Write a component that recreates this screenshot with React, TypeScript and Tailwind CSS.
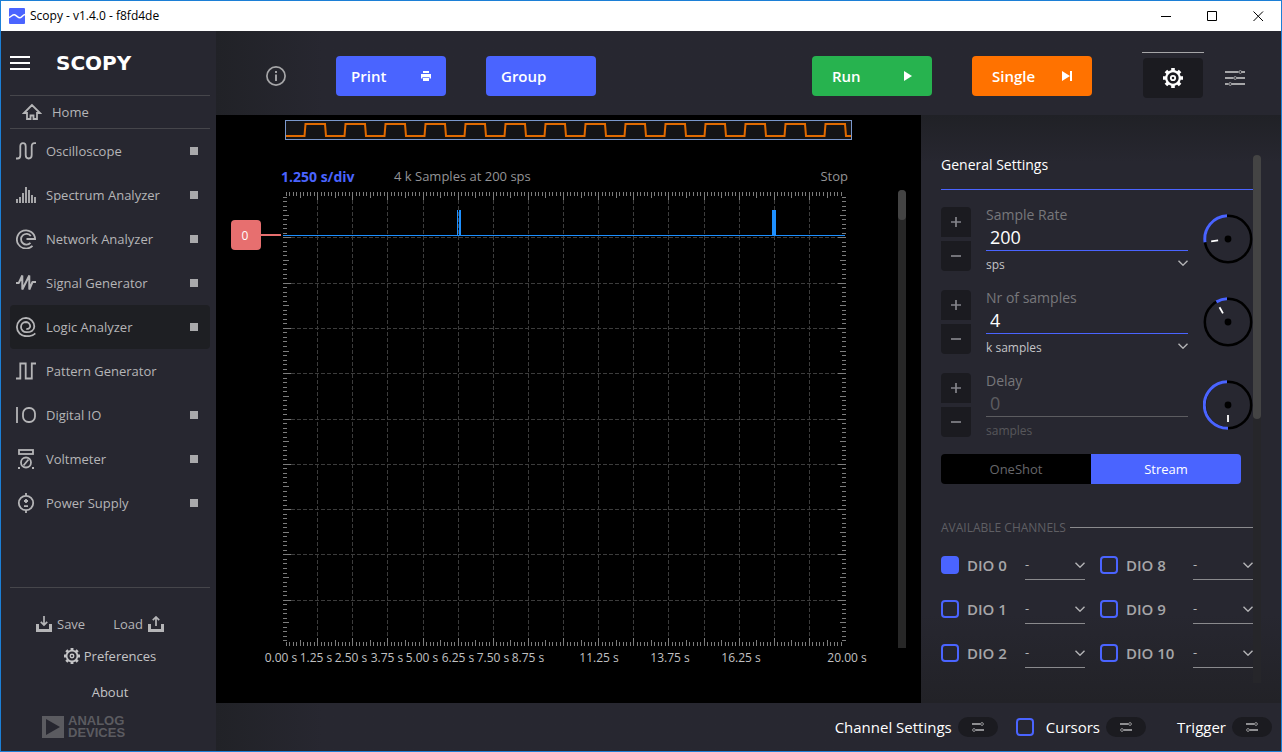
import { useState, type ReactNode } from "react";

/* ---------- icons ---------- */

function Glyph({ children, className = "size-5" }: { children: ReactNode; className?: string }) {
  return (
    <svg viewBox="0 0 20 20" className={className} fill="none" stroke="currentColor" strokeWidth="1.8" aria-hidden="true">
      {children}
    </svg>
  );
}

const toolIcons: Record<string, ReactNode> = {
  Oscilloscope: (
    <path d="M0 17.5h1.500c2 0 2.800-1 2.800-3V5.500c0-2.300.8-3.300 2.700-3.300s2.700 1 2.700 3.300v8.500c0 2.300 1 3.500 3 3.500s3-1.200 3-3.500V5.500c0-2.300.8-3.300 2.800-3.300H20" />
  ),
  "Spectrum Analyzer": <path d="M1 18v-4M4 18v-6M7 18V8M10 18V2M13 18V5M16 18v-8M19 18v-6" />,
  "Network Analyzer": (
    <path d="M16.500 16.800A9.100 9.100 0 1 1 19.100 10H10.500M14.500 13.800A5.400 5.400 0 1 1 14.800 7" />
  ),
  "Signal Generator": <path d="M0 10h2.800L6.300 2.500v14L13.300 2.500v14L16.500 9H20" strokeWidth="2" strokeLinejoin="bevel" />,
  "Logic Analyzer": (
    <path d="M19.300 16.300C17 18.600 13.500 19.300 10.500 19.200A9.400 9.200 0 0 1 .9 10 9.100 9.100 0 0 1 10 .9 8.600 8.600 0 0 1 18.300 9.500C18.300 13.500 14.500 15.300 10.500 15.200A5.300 5.200 0 0 1 5 10 5 5 0 0 1 10 5 4.400 4.400 0 0 1 14.200 9.300 3 3 0 0 1 10.300 11.800" />
  ),
  "Pattern Generator": <path d="M0 17.500h4.300v-15h5.400v15h6.100v-15H20" />,
  "Digital IO": (
    <>
      <path d="M1 2v16" />
      <rect x="7" y="3" width="12" height="14" rx="5.500" />
    </>
  ),
  Voltmeter: (
    <>
      <rect x="3" y="1" width="14" height="4" />
      <circle cx="10" cy="13.500" r="5" />
      <path d="M7.500 16.500l5-6M2 19h2M16 19h2" />
    </>
  ),
  "Power Supply": (
    <>
      <circle cx="10" cy="10" r="7.200" />
      <path d="M10 0v3M10 17v3M8 8h4M10 6v4M8 13.200h4" />
    </>
  ),
};

function Gear({ className }: { className: string }) {
  return (
    <svg viewBox="0 0 20 20" className={className} fill="none" stroke="currentColor" aria-hidden="true">
      <circle cx="10" cy="10" r="6.800" strokeWidth="2.200" />
      <circle cx="10" cy="10" r="2.200" strokeWidth="1.800" />
      <path
        d="M10 0v3M10 17v3M0 10h3M17 10h3M2.900 2.900L5 5M15 15l2.100 2.100M2.900 17.100L5 15M15 5l2.100-2.100"
        strokeWidth="3.600"
      />
    </svg>
  );
}

function Tray({ up }: { up?: boolean }) {
  return (
    <svg viewBox="0 0 16 16" className="size-4" fill="none" stroke="currentColor" aria-hidden="true">
      <path d="M0 8h3v5h10V8h3v8H0z" fill="currentColor" stroke="none" />
      <path d={up ? "M8 10V1M4.800 4.200L8 1l3.200 3.200" : "M8 0v9M4.800 5.800L8 9l3.200-3.200"} strokeWidth="1.700" />
    </svg>
  );
}

function Chevron() {
  return (
    <svg viewBox="0 0 10 6" className="h-[6px] w-[10px]" fill="none" stroke="#b4b4b6" strokeWidth="1.400" aria-hidden="true">
      <path d="M.5.7L5 5.200 9.500.7" />
    </svg>
  );
}

function Sliders() {
  return (
    <svg viewBox="0 0 20 16" className="h-4 w-5" fill="none" stroke="#a6a6a8" aria-hidden="true">
      <path d="M0 2h13.500M17 2h3M0 8h8.500M12 8h8M0 14h3.500M7 14h13" strokeWidth="1.800" />
      <circle cx="15.300" cy="2" r="1.400" />
      <circle cx="10.200" cy="8" r="1.400" />
      <circle cx="5.200" cy="14" r="1.400" />
    </svg>
  );
}

function PillButton({ label }: { label: string }) {
  return (
    <button type="button" aria-label={label} className="flex h-5 w-10 shrink-0 items-center justify-center rounded-full bg-[#1b1b20]">
      <svg viewBox="0 0 12 10" className="h-[10px] w-3" fill="none" stroke="#8f8f92" aria-hidden="true">
        <path d="M0 2h8.500M3.500 8H12" strokeWidth="1.800" />
        <circle cx="10" cy="2" r="1.400" />
        <circle cx="2" cy="8" r="1.400" />
      </svg>
    </button>
  );
}

/* ---------- title bar ---------- */

function TitleBar() {
  return (
    <header className="flex h-[30px] shrink-0 items-center bg-white pl-2 text-xs text-black">
      <svg viewBox="0 0 16 16" className="mr-[5px] size-4" aria-hidden="true">
        <rect width="16" height="16" rx="1" fill="#4a64ff" />
        <path d="M0 9.500C2.500 8.500 3.500 6.500 5.500 6.800S9 10 11 9.800 13.500 7 16 6.500" stroke="#fff" strokeWidth="1.500" fill="none" />
      </svg>
      <h1>Scopy - v1.4.0 - f8fd4de</h1>
      <div className="ml-auto flex h-full">
        {[
          ["Minimize", "M0 5.500h10"],
          ["Maximize", "M.5.5h9v9h-9z"],
          ["Close", "M.5.5l9.500 9.500M10 .5L.5 10"],
        ].map(([name, d]) => (
          <button key={name} type="button" aria-label={name} className="flex w-[46px] items-center justify-center">
            <svg viewBox="0 0 10 10" className="size-[10px] overflow-visible" fill="none" stroke="#000" aria-hidden="true">
              <path d={d} />
            </svg>
          </button>
        ))}
      </div>
    </header>
  );
}

/* ---------- sidebar ---------- */

function Sidebar() {
  return (
    <aside className="flex w-[215px] shrink-0 flex-col bg-[#272730] pr-[6px] pl-[9px] text-[13px] text-[#b5b5b7]">
      <div className="box-content flex h-16 items-center border-b border-[#46464b]">
        <button type="button" aria-label="Menu" className="flex w-5 flex-col gap-1">
          <span className="h-[2px] bg-white" />
          <span className="h-[2px] bg-white" />
          <span className="h-[2px] bg-white" />
        </button>
        <span className="ml-[26px] font-['DejaVu_Sans',sans-serif] text-xl leading-5 font-bold text-white">SCOPY</span>
      </div>
      <a href="#home" className="box-content flex h-8 items-center gap-[10px] border-b border-[#46464b] pl-3">
        <Glyph>
          <path d="M10 3L2 11h3v6h3.500v-3.500h3V17H15v-6h3z" strokeWidth="1.800" />
        </Glyph>
        <span className="pt-[2px]">Home</span>
      </a>
      <nav className="flex flex-col">
        {Object.keys(toolIcons).map((name) => (
          <a
            key={name}
            href={"#" + name.toLowerCase().replace(" ", "-")}
            className={`flex h-11 items-center gap-[10px] rounded pr-3 pl-[6px] ${name === "Logic Analyzer" ? "bg-[#1e1f23]" : ""}`}
          >
            <Glyph>{toolIcons[name]}</Glyph>
            <span className="pt-[2px]">{name}</span>
            {name !== "Pattern Generator" && <span className="ml-auto size-2 bg-[#a9a9ab]" />}
          </a>
        ))}
      </nav>
      <div className="mt-auto flex flex-col items-center border-t border-[#46464b] pt-6 pb-3">
        <div className="flex h-6 gap-7 pr-5">
          <button type="button" className="flex items-center gap-[5px]">
            <Tray />
            <span className="pt-[2px]">Save</span>
          </button>
          <button type="button" className="flex items-center gap-[5px]">
            <span className="pt-[2px]">Load</span>
            <Tray up />
          </button>
        </div>
        <button type="button" className="mt-2 flex h-6 items-center gap-1 text-[#c4c4c6]">
          <Gear className="size-4" />
          <span className="pt-[2px]">Preferences</span>
        </button>
        <button type="button" className="mt-3 h-6 pt-[2px] text-[#c4c4c6]">
          About
        </button>
        <div className="mt-[11px] flex h-6 items-center gap-1 self-start pl-8 text-[#5b5b60]">
          <svg viewBox="0 0 22 22" className="size-[22px]" aria-hidden="true">
            <path d="M0 0h22v22H0zM4 3v16l14-8z" fill="currentColor" fillRule="evenodd" />
          </svg>
          <span className="flex flex-col font-['Liberation_Sans',sans-serif] text-[13px] leading-3 font-bold">
            <span>ANALOG</span>
            <span>DEVICES</span>
          </span>
        </div>
      </div>
    </aside>
  );
}

/* ---------- toolbar ---------- */

function Toolbar() {
  const action = "flex h-10 items-center justify-between rounded font-semibold text-white text-[15px]";
  return (
    <div className="flex h-[84px] shrink-0 items-center bg-linear-to-r from-[#212227] to-[#272730] to-10% pt-[6px] pr-[15px] pl-[50px]">
      <button type="button" aria-label="Information" className="mr-[50px] text-[#a6a6a8]">
        <Glyph>
          <circle cx="10" cy="10" r="9.100" strokeWidth="1.700" />
          <path d="M10 5v2M10 8.500V15" strokeWidth="1.900" />
        </Glyph>
      </button>
      <div className="flex gap-10">
        <button type="button" className={action + " w-[110px] bg-[#4a64ff] px-[15px]"}>
          Print
          <svg viewBox="0 0 10 10" className="size-[10px]" aria-hidden="true">
            <path d="M2 0h6v2H2zM0 3h10v4.500H8.500V6h-7v1.500H0zM2 6.800h6V10H2z" fill="#fff" />
          </svg>
        </button>
        <button type="button" className={action + " w-[110px] bg-[#4a64ff] px-[15px]"}>
          Group
        </button>
      </div>
      <div className="ml-auto flex gap-10">
        <button type="button" className={action + " w-[120px] bg-[#27b34f] px-5"}>
          Run
          <svg viewBox="0 0 8 10" className="h-[10px] w-2" aria-hidden="true">
            <path d="M0 0l8 5-8 5z" fill="#fff" />
          </svg>
        </button>
        <button type="button" className={action + " w-[120px] bg-[#ff7200] px-5"}>
          Single
          <svg viewBox="0 0 10 10" className="size-[10px]" aria-hidden="true">
            <path d="M0 0l8 5-8 5zM8 0h2v10H8z" fill="#fff" />
          </svg>
        </button>
      </div>
      <div className="ml-[50px] flex">
        <div className="flex w-[62px] justify-center border-t border-[#a6a6a8] pt-[5px] pb-[2px]">
          <button type="button" aria-label="General settings" className="flex h-10 w-[60px] items-center justify-center rounded bg-[#1b1b20] text-white">
            <Gear className="size-5" />
          </button>
        </div>
        <div className="flex w-[62px] justify-center border-t border-transparent pt-[5px] pb-[2px]">
          <button type="button" aria-label="Channel options" className="flex h-10 w-[60px] items-center justify-center rounded">
            <Sliders />
          </button>
        </div>
      </div>
    </div>
  );
}

/* ---------- plot ---------- */

const columns = Array.from({ length: 15 }, (_, i) => Math.floor(66.49 + 35.13 * (i + 1)) + 0.5);
const rows = Array.from({ length: 9 }, (_, i) => Math.round(6 + 45.3 * (i + 1)) + 0.5);
const tickLength = (i: number) => (i % 10 === 0 ? 8 : i % 5 === 0 ? 6 : 4);

const xTicks = Array.from({ length: 159 }, (_, k) => {
  const i = k + 1;
  const x = Math.floor(66.49 + 3.513 * i) + 0.5;
  return `M${x} 6v${tickLength(i)}M${x} 460v-${tickLength(i)}`;
}).join("");
const yTicks = Array.from({ length: 99 }, (_, k) => {
  const i = k + 1;
  const y = Math.round(6 + 4.53 * i) + 0.5;
  return `M67 ${y}h${tickLength(i)}M630 ${y}h-${tickLength(i)}`;
}).join("");
const timeLabels: [number, string][] = [
  [0, "0.00 s"],
  [1, "1.25 s"],
  [2, "2.50 s"],
  [3, "3.75 s"],
  [4, "5.00 s"],
  [5, "6.25 s"],
  [6, "7.50 s"],
  [7, "8.75 s"],
  [9, "11.25 s"],
  [11, "13.75 s"],
  [13, "16.25 s"],
  [16, "20.00 s"],
];
const overviewWave =
  "M1 16" + Array.from({ length: 14 }, (_, i) => `H${19.5 + 40 * i}L${20.5 + 40 * i} 4H${40 + 40 * i}L${41 + 40 * i} 16`).join("") + "H566";

function Plot() {
  return (
    <section aria-label="Logic plot" className="flex min-w-0 flex-1 flex-col bg-black">
      <svg viewBox="0 0 567 20" className="mt-[5px] mr-[69px] ml-[69px] block" aria-hidden="true">
        <rect x=".5" y=".5" width="566" height="19" fill="#141416" stroke="#7b98cc" />
        <path d={overviewWave} fill="none" stroke="#e06a00" strokeWidth="2" />
      </svg>
      <div className="mt-[26px] mr-[73px] ml-[65px] flex h-[20px] items-center pt-[2px] text-[13px] text-[#949496]">
        <span className="w-[113px] text-sm font-bold text-[#4a64ff]">1.250 s/div</span>
        <span>4 k Samples at 200 sps</span>
        <span className="ml-auto">Stop</span>
      </div>
      <div className="flex pr-[15px]">
        <svg viewBox="0 0 682 488" className="block min-w-0 flex-1 font-['Open_Sans',sans-serif]" aria-label="Waveform over time">
          <g stroke="#3c3c3c" strokeDasharray="4 2" fill="none">
            {columns.map((x) => (
              <path key={x} d={`M${x} 14V452`} />
            ))}
            {rows.map((y) => (
              <path key={y} d={`M75 ${y}H622`} />
            ))}
          </g>
          <path d={xTicks + yTicks} stroke="#7c7c7c" />
          <path d="M67 49.500H629" stroke="#1e90ff" />
          <path d="M241 24h1v25h-1zM243 24h2v25h-2zM556 24h4v25h-4z" fill="#1e90ff" />
          <rect x="15" y="34" width="30" height="30" rx="4" fill="#e76f6f" />
          <path d="M44 49H65" stroke="#e76f6f" strokeWidth="2" />
          <text x="29" y="54" textAnchor="middle" fontSize="12" fill="#fff">
            0
          </text>
          <g fill="#c0c0c2" fontSize="12" textAnchor="middle">
            {timeLabels.map(([i, label]) => (
              <text key={label} x={Math.round(64.5 + 35.4 * i)} y="476">
                {label}
              </text>
            ))}
          </g>
        </svg>
        <div className="mt-1 mb-[26px] w-2 shrink-0 rounded-t bg-[#272727]">
          <div className="h-[30px] rounded bg-[#444444]" />
        </div>
      </div>
    </section>
  );
}

/* ---------- settings ---------- */

function Dial({ angle }: { angle: number }) {
  const rad = (angle * Math.PI) / 180;
  const px = (r: number) => 25 - r * Math.sin(rad);
  const py = (r: number) => 25 - r * Math.cos(rad);
  return (
    <svg viewBox="0 0 50 50" className="mt-[7px] size-[50px] shrink-0" fill="none" aria-hidden="true">
      <circle cx="25" cy="25" r="23.200" stroke="#000" strokeWidth="2.500" />
      <path d={`M24 1.800A23.200 23.200 0 0 0 ${px(23.2)} ${py(23.2)}`} stroke="#4a64ff" strokeWidth="3" />
      <circle cx="25" cy="25" r="3.400" fill="#000" />
      <path d={`M${px(10)} ${py(10)}L${px(17)} ${py(17)}`} stroke="#fff" strokeWidth="1.800" />
    </svg>
  );
}

type FieldProps = { id: string; label: string; value: string; unit: string; angle: number; disabled?: boolean };

function SpinField({ id, label, value, unit, angle, disabled }: FieldProps) {
  const [text, setText] = useState(value);
  return (
    <div className="flex items-start">
      <div className="flex w-[30px] flex-col gap-1">
        <button type="button" aria-label={`Increase ${label}`} className="flex h-[30px] items-center justify-center rounded-t bg-[#1b1b20]">
          <svg viewBox="0 0 10 10" className="size-[10px]" stroke="#84848a" strokeWidth="1.700" aria-hidden="true">
            <path d="M0 5h10M5 0v10" />
          </svg>
        </button>
        <button type="button" aria-label={`Decrease ${label}`} className="flex h-[30px] items-center justify-center rounded-b bg-[#1b1b20]">
          <svg viewBox="0 0 10 10" className="size-[10px]" stroke="#84848a" strokeWidth="1.700" aria-hidden="true">
            <path d="M0 5h10" />
          </svg>
        </button>
      </div>
      <div className="mr-[15px] ml-[15px] flex min-w-0 flex-1 flex-col">
        <label htmlFor={id} className="h-4 text-sm leading-4 text-[#77777b]">
          {label}
        </label>
        <input
          id={id}
          value={text}
          disabled={disabled}
          onChange={(e) => setText(e.target.value)}
          className={`h-7 w-full border-b bg-transparent px-1 pt-px text-lg leading-6 outline-none ${disabled ? "border-[#5c5c60] text-[#5c5c60]" : "border-[#4a64ff] text-white"}`}
        />
        <div className="relative flex h-6 items-center">
          <select
            aria-label={`${label} unit`}
            disabled={disabled}
            className={`h-6 w-full appearance-none bg-transparent pt-1 text-xs opacity-100 outline-none ${disabled ? "text-[#57575b]" : "text-[#c4c4c6]"}`}
          >
            <option>{unit}</option>
          </select>
          {!disabled && (
            <span className="pointer-events-none absolute right-0">
              <Chevron />
            </span>
          )}
        </div>
      </div>
      <Dial angle={angle} />
    </div>
  );
}

function Check({ id, checked }: { id: string; checked?: boolean }) {
  return (
    <input
      id={id}
      type="checkbox"
      defaultChecked={checked}
      className="size-[18px] shrink-0 appearance-none rounded border-2 border-[#4a64ff] checked:bg-[#4a64ff]"
    />
  );
}

function Channel({ n }: { n: number }) {
  const id = `dio-${n}`;
  return (
    <div className="flex h-[30px] items-center">
      <Check id={id} checked={n === 0} />
      <label htmlFor={id} className="ml-2 text-[15px] font-semibold whitespace-nowrap text-[#a6a6a8]">
        DIO {n}
      </label>
      <div className="relative ml-auto flex w-[60px] items-center">
        <select
          aria-label={`DIO ${n} decoder`}
          className="h-[30px] w-full appearance-none border-b border-[#8a8a8d] bg-transparent text-[13px] text-[#b5b5b7] outline-none"
        >
          <option>-</option>
        </select>
        <span className="pointer-events-none absolute right-0">
          <Chevron />
        </span>
      </div>
    </div>
  );
}

function SettingsPanel() {
  return (
    <section
      aria-label="General Settings"
      className="flex w-[360px] shrink-0 bg-[linear-gradient(#202126,#272730_8%,#272730_85%,#222227)] pt-10 pr-5 pb-5 pl-5"
    >
      <div className="flex min-w-0 flex-1 flex-col">
        <h2 className="h-[35px] border-b border-[#4a64ff] text-sm leading-5 text-white">General Settings</h2>
        <div className="mt-[17px] flex flex-col gap-[15px]">
          <SpinField id="rate" label="Sample Rate" value="200" unit="sps" angle={98} />
          <SpinField id="count" label="Nr of samples" value="4" unit="k samples" angle={30} />
          <SpinField id="delay" label="Delay" value="0" unit="samples" angle={180} disabled />
        </div>
        <div className="mt-[13px] mr-3 grid h-[30px] grid-cols-2 text-[13px]">
          <button type="button" className="rounded-l bg-black pt-[2px] text-[#67676b]">
            OneShot
          </button>
          <button type="button" className="rounded-r-sm bg-[#4a64ff] pt-[2px] text-white">
            Stream
          </button>
        </div>
        <div className="mt-[33px] flex h-5 items-center gap-1 text-xs text-[#5f5f64]">
          <span className="pt-[2px]">AVAILABLE CHANNELS</span>
          <span className="h-px flex-1 bg-[#8a8a8d]" />
        </div>
        <div className="mt-[13px] grid grid-cols-[144px_1fr] gap-x-[15px] gap-y-[14px]">
          {[0, 8, 1, 9, 2, 10].map((n) => (
            <Channel key={n} n={n} />
          ))}
        </div>
      </div>
      <div className="w-2 rounded-t bg-[#26262a]">
        <div className="h-[264px] rounded bg-[#444444]" />
      </div>
    </section>
  );
}

/* ---------- bottom bar ---------- */

function BottomBar() {
  return (
    <footer className="flex h-12 shrink-0 items-center justify-end bg-linear-to-r from-[#212227] to-[#272730] to-10% pr-[9px] text-[15px] text-white">
      <span className="mr-[6px]">Channel Settings</span>
      <PillButton label="Channel settings" />
      <span className="ml-[18px] flex items-center">
        <Check id="cursors" />
      </span>
      <label htmlFor="cursors" className="mr-[6px] ml-3">
        Cursors
      </label>
      <PillButton label="Cursor settings" />
      <span className="mr-[6px] ml-[31px]">Trigger</span>
      <PillButton label="Trigger settings" />
    </footer>
  );
}

export default function App() {
  return (
    <div className="flex min-h-screen flex-col border border-[#1c7fd6] bg-[#272730] font-['Open_Sans',sans-serif]">
      <TitleBar />
      <div className="flex flex-1">
        <Sidebar />
        <main className="flex min-w-0 flex-1 flex-col">
          <Toolbar />
          <div className="flex flex-1">
            <Plot />
            <SettingsPanel />
          </div>
          <BottomBar />
        </main>
      </div>
    </div>
  );
}
